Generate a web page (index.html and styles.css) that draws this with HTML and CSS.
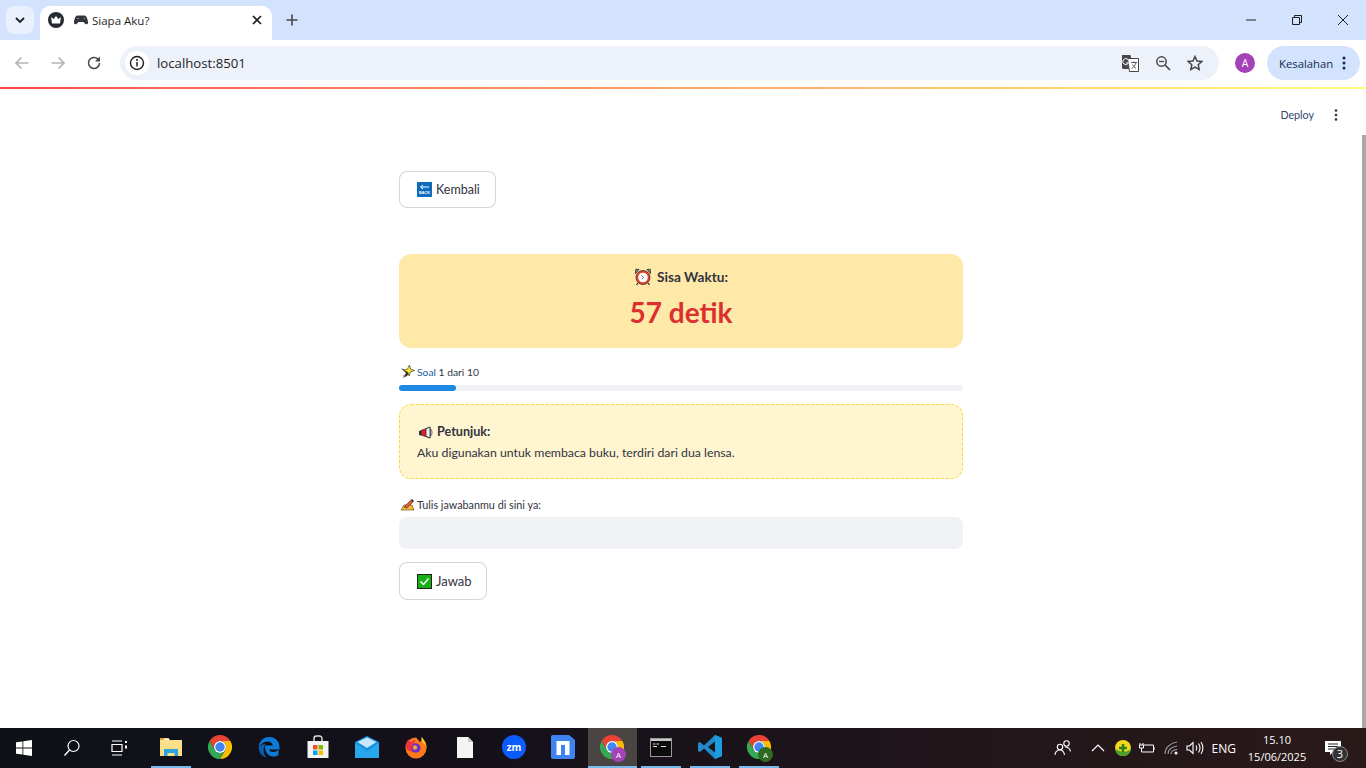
FILE: index.html
```html
<!DOCTYPE html>
<html lang="id">
<head>
  <meta charset="UTF-8">
  <title>Siapa Aku?</title>
  <link rel="stylesheet" href="styles.css">
</head>
<body>

<svg class="defs" width="0" height="0">
  <symbol id="chrome" viewBox="0 0 24 24">
    <path fill="#ea4335" d="M12 6h10.4A12 12 0 0 0 1.6 6L6.8 15A6 6 0 0 1 12 6z"/>
    <path fill="#fbbc04" d="M22.4 6H12a6 6 0 0 1 5.2 9L12 24A12 12 0 0 0 22.4 6z"/>
    <path fill="#34a853" d="M12 24l5.2-9a6 6 0 0 1-10.4 0L1.6 6A12 12 0 0 0 12 24z"/>
    <circle cx="12" cy="12" r="6" fill="#fff"/>
    <circle cx="12" cy="12" r="4.7" fill="#4285f4"/>
  </symbol>
</svg>

<!-- tab bar -->
<div class="tabstrip">
  <div class="tab-search">
    <svg width="12" height="12" viewBox="0 0 12 12"><path d="M2 4l4 4 4-4" fill="none" stroke="#1f1f1f" stroke-width="1.8"/></svg>
  </div>
  <div class="tab">
    <svg class="tab-favicon" width="16" height="16" viewBox="0 0 16 16"><circle cx="8" cy="8" r="8" fill="#262b33"/><path d="M3 5l2.6 2L8 4l2.400 3L13 5l-1 6.500H4z" fill="#fff"/></svg>
    <svg class="tab-emoji" width="16" height="16" viewBox="0 0 16 16"><path d="M4.500 3.500h7c2 0 3 3 3.500 6.500.3 2.200-1.700 3.200-3 1.500L10.500 10h-5L4 11.500c-1.300 1.700-3.300.7-3-1.500.5-3.500 1.500-6.500 3.500-6.500z" fill="#30343b"/><circle cx="11.500" cy="6.500" r=".9" fill="#6b7078"/><rect x="3.500" y="6" width="3" height="1" fill="#6b7078"/></svg>
    <span class="tab-title">Siapa Aku?</span>
    <svg class="tab-close" width="10" height="10" viewBox="0 0 10 10"><path d="M1 1l8 8M9 1l-8 8" stroke="#1f1f1f" stroke-width="1.700"/></svg>
  </div>
  <svg class="tab-new" width="12" height="12" viewBox="0 0 12 12"><path d="M6 .5v11M.5 6h11" stroke="#474747" stroke-width="1.600"/></svg>
  <div class="win-controls">
    <svg width="12" height="12" viewBox="0 0 12 12"><path d="M1 6h10" stroke="#1f1f1f"/></svg>
    <svg width="12" height="12" viewBox="0 0 12 12"><path d="M1.500 3.500h7v7h-7zM3.500 3.500v-2h7v7h-2" fill="none" stroke="#1f1f1f"/></svg>
    <svg width="12" height="12" viewBox="0 0 12 12"><path d="M1 1l10 10M11 1L1 11" stroke="#1f1f1f"/></svg>
  </div>
</div>

<!-- address bar -->
<div class="toolbar">
  <svg class="tool-btn" width="16" height="16" viewBox="0 0 16 16"><path d="M14.500 8H2M7.500 2.500L2 8l5.500 5.500" fill="none" stroke="#b2b4b7" stroke-width="1.700"/></svg>
  <svg class="tool-btn" width="16" height="16" viewBox="0 0 16 16"><path d="M1.500 8H14M8.500 2.500L14 8l-5.500 5.500" fill="none" stroke="#b2b4b7" stroke-width="1.700"/></svg>
  <svg class="tool-btn" width="16" height="16" viewBox="0 0 16 16"><path d="M13.500 8a5.500 5.500 0 1 1-1.600-3.900L13.500 5.700" fill="none" stroke="#474747" stroke-width="1.600"/><path d="M14 1.500V6.500H9z" fill="#474747"/></svg>
  <div class="omnibox">
    <div class="site-info">
      <svg width="16" height="16" viewBox="0 0 16 16"><circle cx="8" cy="8" r="6.500" fill="none" stroke="#1f1f1f" stroke-width="1.400"/><path d="M8 7v4.500" stroke="#1f1f1f" stroke-width="1.500"/><circle cx="8" cy="5" r="1" fill="#1f1f1f"/></svg>
    </div>
    <span class="url">localhost:8501</span>
    <div class="omni-actions">
      <svg width="18" height="18" viewBox="0 0 18 18"><path d="M1 1h8.500l3 14H2.500A1.500 1.500 0 0 1 1 13.500z" fill="#474747"/><path d="M6.500 4.500h11v13h-9z" fill="#fff" stroke="#474747"/><path d="M7 5.500a3 3 0 1 0 .5 3.500H5" fill="none" stroke="#fff" stroke-width="1"/><path d="M10 8.500h6M13 7.500v1M15 8.500c-.5 2.500-2.500 5-4.500 6M11.500 10.500c.6 1.500 2 3 3.500 4" fill="none" stroke="#474747" stroke-width=".9"/></svg>
      <svg width="16" height="16" viewBox="0 0 16 16"><circle cx="6.500" cy="6.500" r="4.700" fill="none" stroke="#474747" stroke-width="1.500"/><path d="M10 10l5 5" stroke="#474747" stroke-width="1.700"/><path d="M4 6.500h5" stroke="#474747" stroke-width="1.300"/></svg>
      <svg width="16" height="16" viewBox="0 0 16 16"><path d="M8 1.500l2 4.500 4.800.5-3.600 3.200 1 4.800L8 12.100l-4.200 2.400 1-4.800L1.200 6.500 6 6z" fill="none" stroke="#474747" stroke-width="1.500"/></svg>
    </div>
  </div>
  <div class="avatar">A</div>
  <div class="profile-pill">
    <span>Kesalahan</span>
    <svg width="4" height="14" viewBox="0 0 4 14"><circle cx="2" cy="2" r="1.500" fill="#0f2a52"/><circle cx="2" cy="7" r="1.500" fill="#0f2a52"/><circle cx="2" cy="12" r="1.500" fill="#0f2a52"/></svg>
  </div>
</div>

<!-- halaman streamlit -->
<div class="page">
  <div class="decoration"></div>
  <div class="app-header">
    <span class="deploy">Deploy</span>
    <svg width="4" height="12" viewBox="0 0 4 12"><circle cx="2" cy="1.500" r="1.300" fill="#31333f"/><circle cx="2" cy="6" r="1.300" fill="#31333f"/><circle cx="2" cy="10.500" r="1.300" fill="#31333f"/></svg>
  </div>
  <div class="scroll-thumb"></div>

  <main class="content">
    <button class="btn btn-back">
      <svg width="15" height="15" viewBox="0 0 15 15"><rect width="15" height="15" fill="#0f6cbd"/><path d="M12 5H4M6 3L3.500 5 6 7" fill="none" stroke="#fff" stroke-width="1"/><text x="7.500" y="12" class="back-text">BACK</text></svg>
      Kembali
    </button>

    <div class="timer-box">
      <div class="timer-label">
        <svg width="18" height="18" viewBox="0 0 18 18"><path d="M1.500 5.500L5 1.500 1.800 1.200zM16.500 5.500L13 1.500l3.200-.3z" fill="#8f9499" stroke="#222" stroke-width=".8"/><path d="M4 15l-1.500 2M14 15l1.500 2" stroke="#222" stroke-width="1.200"/><circle cx="9" cy="9.500" r="7" fill="#e8412c" stroke="#222" stroke-width=".7"/><circle cx="9" cy="9.500" r="4.800" fill="#fff"/><path d="M7.500 7.500L9.500 9.500 7.800 11" fill="none" stroke="#444" stroke-width=".8"/></svg>
        <b>Sisa Waktu:</b>
      </div>
      <div class="timer-value">57 detik</div>
    </div>

    <div class="progress-label">
      <svg width="15" height="15" viewBox="0 0 15 15"><path d="M1 4l5 5-3 5 4-2 3-4z" fill="#333"/><path d="M9.500 1l1 4 4 1.500-4 1.300-1.300 4.200L7.500 8 3.500 6.500l4-1.500z" fill="#fbe72d" stroke="#3d3a1a" stroke-width=".7"/><circle cx="4" cy="12" r="1" fill="#d86fa8"/></svg>
      <span><span class="blue">Soal</span> 1 dari 10</span>
    </div>
    <div class="progress-track"><div class="progress-fill"></div></div>

    <div class="hint-box">
      <div class="hint-title">
        <svg width="15" height="13" viewBox="0 0 15 13"><path d="M1 5l2-.5v5L1 9z" fill="#333"/><path d="M3 4.500L12 1v11L3 9z" fill="#d8232a" stroke="#222" stroke-width=".7"/><path d="M8 2.800L12 1v11L8 10.200z" fill="#eee" stroke="#222" stroke-width=".7"/><path d="M12.500 3c2 1 2 6 0 7z" fill="#eee" stroke="#222" stroke-width=".7"/></svg>
        <b>Petunjuk:</b>
      </div>
      <p class="hint-text">Aku digunakan untuk membaca buku, terdiri dari dua lensa.</p>
    </div>

    <label class="answer-label">
      <svg width="15" height="13" viewBox="0 0 15 13"><path d="M1 12L4 7h8l2 5z" fill="#f6b73c" stroke="#5b4310" stroke-width=".6"/><path d="M4 9l7-7 2 2-6 6z" fill="#e2572b" stroke="#333" stroke-width=".6"/><path d="M11 2l1-1 2 2-1 1z" fill="#222"/></svg>
      <span>Tulis jawabanmu di sini ya:</span>
    </label>
    <input class="answer-input" type="text">

    <button class="btn btn-answer">
      <svg width="15" height="15" viewBox="0 0 15 15"><rect x=".5" y=".5" width="14" height="14" fill="#16b016" stroke="#222"/><path d="M3.500 7.500l3 3 5-6" fill="none" stroke="#fff" stroke-width="1.500"/></svg>
      Jawab
    </button>
  </main>
</div>

<!-- taskbar windows -->
<footer class="taskbar">
  <div class="task-sys">
    <svg width="16" height="16" viewBox="0 0 16 16"><path d="M0 2.300l6.500-.9v6.200H0zM7.300 1.300L16 0v7.600H7.300zM0 8.400h6.500v6.200L0 13.700zM7.300 8.400H16V16l-8.700-1.200z" fill="#fff"/></svg>
  </div>
  <div class="task-sys">
    <svg width="18" height="18" viewBox="0 0 18 18"><circle cx="10.500" cy="7" r="5.500" fill="none" stroke="#fff" stroke-width="1.200"/><path d="M6.500 11L1.500 16.500" stroke="#fff" stroke-width="1.400"/></svg>
  </div>
  <div class="task-sys">
    <svg width="18" height="16" viewBox="0 0 18 16"><path d="M1 1h10M1 15h10M1 4.500h10v7H1z" fill="none" stroke="#fff" stroke-width="1.200"/><path d="M14 1h2v2h-2zM14 5.500h2v3h-2z" fill="#fff"/></svg>
  </div>
  <div class="task-app open">
    <svg width="22" height="20" viewBox="0 0 22 20"><path d="M0 1h8l2 2h12v16H0z" fill="#fbe08c"/><path d="M0 1h8l2 2H0z" fill="#e0a92f"/><rect x="4" y="1.500" width="5" height="1.500" fill="#fff"/><path d="M4 19v-7h14v7h-3.500v-3h-7v3z" fill="#2ea3e0"/></svg>
  </div>
  <div class="task-app"><svg width="24" height="24"><use href="#chrome"/></svg></div>
  <div class="task-app">
    <svg width="22" height="22" viewBox="0 0 22 22"><path d="M11.500 1C5 1 .8 6 .8 11c2-3.500 5.500-5.500 9-5.500 2.500 0 4.500 1.300 5 4H7c-.5 5 2.500 11 8 11 2 0 4-.5 5.500-1.500v-5C19 15 17 16 15 16c-2.500 0-3.500-1.200-3.800-2.500H21.500V11c0-5.500-4-10-10-10z" fill="#0c7ad6"/><path d="M.8 11C.5 16 4 21 9 21.500 4.500 18 5 12 7.500 8 4.500 8 2 9.500.8 11z" fill="#0a5fb0"/></svg>
  </div>
  <div class="task-app">
    <svg width="24" height="24" viewBox="0 0 24 24"><path d="M8 6V3.500A2.500 2.500 0 0 1 10.500 1h3A2.500 2.500 0 0 1 16 3.500V6" fill="none" stroke="#ddd" stroke-width="1.400"/><path d="M1.500 6h21v17h-21z" fill="#f3f3f3"/><rect x="7" y="10" width="4.500" height="4.500" fill="#f25022"/><rect x="12.500" y="10" width="4.500" height="4.500" fill="#7fba00"/><rect x="7" y="15.500" width="4.500" height="4.500" fill="#00a4ef"/><rect x="12.500" y="15.500" width="4.500" height="4.500" fill="#ffb900"/></svg>
  </div>
  <div class="task-app">
    <svg width="24" height="22" viewBox="0 0 24 22"><path d="M0 6l12-6 12 6v16H0z" fill="#1490df"/><path d="M2.500 6L12 1.500 21.500 6 12 12z" fill="#c7e8fb"/><path d="M0 7l12 8 12-8v15H0z" fill="#28a8ea"/></svg>
  </div>
  <div class="task-app">
    <svg width="24" height="24" viewBox="0 0 24 24"><path d="M12 2.500a10.500 10.500 0 1 0 10.500 10.500c0-4-1.500-7.500-5-11 .5 3-.5 4.500-1.500 5C14.500 5 13 3.500 12 2.500z" fill="#ff7a1a"/><path d="M17.500 2c3.500 3.500 5 7 5 11-1-3-2.500-5-4.500-6z" fill="#ffc32e"/><path d="M1.500 13C1 9 3 6 5 4c0 2 1 3 2.500 3C9 5.500 11 5 12 5c-1 1-2 2-2 3 3 0 6 2 6 5s-3 5-6 4.500C6 17 4 15 1.500 13z" fill="#e8363f"/><circle cx="12" cy="13" r="4.500" fill="#6a2fd0"/><circle cx="11" cy="12.500" r="2.200" fill="#ff9f2e"/></svg>
  </div>
  <div class="task-app">
    <svg width="16" height="21" viewBox="0 0 16 21"><path d="M0 0h11l5 5v16H0z" fill="#f4f4f4"/><path d="M11 0l5 5h-5z" fill="#c9c9c9"/></svg>
  </div>
  <div class="task-app"><div class="zoom-icon">zm</div></div>
  <div class="task-app">
    <svg width="24" height="24" viewBox="0 0 24 24"><path d="M2 0h16l6 5v17a2 2 0 0 1-2 2H2a2 2 0 0 1-2-2V2a2 2 0 0 1 2-2z" fill="#3f83f0"/><path d="M5.500 20V6h13v14h-4.500V10h-4v10z" fill="#fff"/></svg>
  </div>
  <div class="task-app active open">
    <div class="chrome-badge">
      <svg width="24" height="24"><use href="#chrome"/></svg>
      <span class="mini-badge purple">A</span>
    </div>
  </div>
  <div class="task-app open">
    <svg width="22" height="19" viewBox="0 0 22 19"><rect x=".5" y=".5" width="21" height="18" fill="#0c0c0c" stroke="#9a9a9a"/><rect x="1" y="1" width="20" height="2" fill="#c8c8c8"/><path d="M3 6h2.500M6.500 6H9M3 8.500h4M11 8.500h5" stroke="#ddd"/></svg>
  </div>
  <div class="task-app open">
    <svg width="24" height="24" viewBox="0 0 24 24"><path d="M17 0l7 3v18l-7 3L6 13.500 2 17l-2-1V8l2-1 4 3.500z" fill="#2489ca"/><path d="M17 0l7 3v18l-7 3z" fill="#1b9de2"/><path d="M17 6.500L10 12l7 5.500z" fill="#1a1414"/></svg>
  </div>
  <div class="task-app open">
    <div class="chrome-badge">
      <svg width="24" height="24"><use href="#chrome"/></svg>
      <span class="mini-badge green">A</span>
    </div>
  </div>

  <div class="tray">
    <svg class="tray-people" width="18" height="16" viewBox="0 0 18 16"><circle cx="6" cy="7" r="2.700" fill="none" stroke="#fff" stroke-width="1.100"/><circle cx="12.500" cy="3.500" r="2.700" fill="none" stroke="#fff" stroke-width="1.100"/><path d="M1 15c0-3 2-5 5-5s4 2 4.500 5M11 7c3 0 5 2 5.500 4.500" fill="none" stroke="#fff" stroke-width="1.100"/></svg>
    <svg class="tray-chevron" width="14" height="8" viewBox="0 0 14 8"><path d="M1 7l6-6 6 6" fill="none" stroke="#fff" stroke-width="1.200"/></svg>
    <svg class="tray-guard" width="16" height="16" viewBox="0 0 16 16"><circle cx="8" cy="8" r="8" fill="#f2d91f"/><path d="M0 8a8 8 0 0 0 16 0c-2 5-12 5-16 0z" fill="#4aa02c"/><path d="M8 4v8M4 8h8" stroke="#2f7d1b" stroke-width="2.500"/></svg>
    <svg class="tray-battery" width="16" height="12" viewBox="0 0 16 12"><path d="M5 3h9.500v7H5" fill="none" stroke="#fff"/><path d="M15 5v3" stroke="#fff"/><path d="M1 1v2M4 1v2M.5 3h4v3h-4zM2.500 6v4H5" fill="none" stroke="#fff"/></svg>
    <svg class="tray-wifi" width="16" height="14" viewBox="0 0 16 14"><path d="M1 13C1 7 6 2 13 1M4 13c0-4 3.500-7 9-8M7 13c0-2.500 2-4 6-4.500" fill="none" stroke="#9c9c9c" stroke-width="1.100"/><circle cx="12" cy="12" r="1.500" fill="#fff"/></svg>
    <svg class="tray-sound" width="18" height="14" viewBox="0 0 18 14"><path d="M1 5v4h2.500L7 12.500v-11L3.500 5z" fill="none" stroke="#fff" stroke-width="1.100"/><path d="M10 4.500c1 1.500 1 3.500 0 5M12.500 2.500c2 3 2 6 0 9M15 1c2.500 3.500 2.500 8.500 0 12" fill="none" stroke="#fff" stroke-width="1.100"/></svg>
    <span class="tray-lang">ENG</span>
    <div class="tray-clock"><span>15.10</span><span>15/06/2025</span></div>
    <div class="tray-notif">
      <svg width="16" height="14" viewBox="0 0 16 14"><path d="M0 0h16v11H8l-3 3v-3H0z" fill="#fff"/><path d="M3 3h10M3 5.500h10M3 8h7" stroke="#222"/></svg>
      <span class="notif-count">3</span>
    </div>
  </div>
</footer>

</body>
</html>
```

FILE: styles.css
```css
* {
  box-sizing: border-box;
}

html, body {
  margin: 0;
  height: 768px;
  overflow: hidden;
}

body {
  display: flex;
  flex-direction: column;
  background: #fff;
  font-family: Lato, "Noto Sans", sans-serif;
  color: #31333f;
}

.defs {
  position: absolute;
}

/* Tab bar */
.tabstrip {
  height: 40px;
  flex: none;
  display: flex;
  background: #d3e3fd;
  padding: 6px 0 0 6px;
}

.tab-search {
  width: 28px;
  height: 28px;
  border-radius: 8px;
  background: #e9f0fc;
  display: flex;
  align-items: center;
  justify-content: center;
}

.tab {
  width: 232px;
  height: 34px;
  margin-left: 6px;
  background: #fff;
  border-radius: 10px 10px 0 0;
  display: flex;
  align-items: center;
  padding: 0 10px 6px 8px;
}

.tab-emoji {
  margin-left: 9px;
}

.tab-title {
  font: 11.500px "Open Sans", sans-serif;
  color: #1f1f1f;
  margin-left: 3px;
  flex: 1;
}

.tab-new {
  margin: 8px 0 0 14px;
}

.win-controls {
  margin-left: auto;
  display: flex;
  gap: 34px;
  padding: 8px 17px 0 0;
}

/* Address bar */
.toolbar {
  height: 46px;
  flex: none;
  background: #fff;
  border-radius: 8px 8px 0 0;
  display: flex;
  align-items: center;
  padding: 0 6px 0 14px;
}

.tool-btn {
  margin-right: 20px;
}

.omnibox {
  width: 1099px;
  height: 34px;
  margin-left: -2px;
  background: #edf2fa;
  border-radius: 17px;
  display: flex;
  align-items: center;
  padding: 0 16px 0 5px;
}

.site-info {
  width: 24px;
  height: 24px;
  border-radius: 50%;
  background: #fff;
  display: flex;
  align-items: center;
  justify-content: center;
}

.url {
  font: 13.200px "Open Sans", sans-serif;
  color: #1f1f1f;
  margin-left: 8px;
}

.omni-actions {
  margin-left: auto;
  display: flex;
  align-items: center;
  gap: 16px;
}

.avatar {
  width: 20px;
  height: 20px;
  margin-left: 16px;
  border-radius: 50%;
  background: #a542b8;
  color: #fff;
  font: 10.500px/20px "Open Sans", sans-serif;
  text-align: center;
}

.profile-pill {
  width: 93px;
  height: 34px;
  margin-left: 12px;
  border-radius: 17px;
  background: #d3e3fd;
  display: flex;
  align-items: center;
  justify-content: space-between;
  padding: 0 14px 0 12px;
  font: 11.300px "Open Sans", sans-serif;
  color: #0f2a52;
}

/* Halaman */
.page {
  flex: 1;
  position: relative;
  overflow: hidden;
  padding-top: 1px;
}

.decoration {
  height: 2px;
  background: linear-gradient(90deg, #ff4b4b, #fffd80);
}

.app-header {
  height: 44px;
  display: flex;
  align-items: center;
  justify-content: flex-end;
  gap: 20px;
  padding: 7px 28px 0 0;
}

.deploy {
  font-size: 10.700px;
  color: #31456e;
}

.scroll-thumb {
  position: absolute;
  top: 49px;
  right: 0;
  bottom: 0;
  width: 4px;
  background: #a8a8a8;
}

.content {
  width: 564px;
  margin: 38px 0 0 399px;
}

.btn {
  height: 37px;
  display: flex;
  align-items: center;
  gap: 4px;
  background: #fff;
  border: 1px solid rgba(49, 51, 63, 0.2);
  border-radius: 8px;
  font: 13px Lato, sans-serif;
  color: #31333f;
  padding: 0 0 0 17px;
}

.btn-back {
  width: 97px;
  font-size: 12.500px;
}

.btn-answer {
  width: 88px;
  height: 38px;
  margin-top: 13px;
}

.back-text {
  font: bold 3.800px "Liberation Sans", sans-serif;
  fill: #fff;
  text-anchor: middle;
}

.timer-box {
  height: 94px;
  margin-top: 46px;
  background: #ffe9a8;
  border-radius: 12px;
  text-align: center;
  padding-top: 14px;
}

.timer-label {
  display: flex;
  justify-content: center;
  align-items: center;
  gap: 5px;
  font-size: 13.600px;
  line-height: 18px;
}

.timer-value {
  font-size: 28px;
  font-weight: 700;
  line-height: 36px;
  margin-top: 8px;
  color: #dc2f2f;
}

.progress-label {
  display: flex;
  align-items: center;
  gap: 2px;
  height: 15px;
  margin: 16px 0 0 1px;
  font-size: 10.300px;
}

.blue {
  color: #1c5a9e;
}

.progress-track {
  height: 6px;
  margin-top: 6px;
  background: #f0f2f6;
  border-radius: 3px;
}

.progress-fill {
  width: 57px;
  height: 6px;
  background: #1e88e5;
  border-radius: 3px;
}

.hint-box {
  height: 75px;
  margin-top: 13px;
  background: #fff5d1;
  border: 1px dashed #fdd835;
  border-radius: 12px;
  padding: 17px 16px 0 17px;
  line-height: 20px;
}

.hint-title {
  display: flex;
  align-items: center;
  gap: 4px;
  padding-left: 1px;
  font-size: 12.600px;
}

.hint-text {
  margin: 1px 0 0;
  font-size: 12.300px;
}

.answer-label {
  display: flex;
  align-items: center;
  gap: 2px;
  height: 16px;
  margin: 17px 0 0 1px;
  font-size: 10.800px;
}

.answer-input {
  display: block;
  width: 100%;
  height: 32px;
  margin-top: 5px;
  background: #f0f2f6;
  border: none;
  border-radius: 8px;
}

/* Taskbar */
.taskbar {
  height: 40px;
  flex: none;
  display: flex;
  align-items: stretch;
  background: linear-gradient(90deg, #0e1118, #14101a 35%, #2a1a1a);
  color: #fff;
}

.task-sys {
  width: 48px;
  display: flex;
  align-items: center;
  justify-content: center;
}

.task-app {
  width: 49px;
  display: flex;
  align-items: center;
  justify-content: center;
  border-bottom: 2px solid transparent;
  position: relative;
}

.task-sys + .task-app {
  margin-left: 2.500px;
}

.task-app.open::after {
  content: "";
  position: absolute;
  left: 4.500px;
  right: 4.500px;
  bottom: -2px;
  height: 2px;
  background: #76b9ed;
}

.task-app.active {
  background: #4a4443;
}

.task-app.active::after {
  left: 0;
  right: 0;
}

.zoom-icon {
  width: 24px;
  height: 24px;
  border-radius: 50%;
  background: #0b5cff;
  color: #fff;
  font: bold 10px/24px "Open Sans", sans-serif;
  text-align: center;
}

.chrome-badge {
  position: relative;
  width: 24px;
  height: 24px;
}

.mini-badge {
  position: absolute;
  right: -2px;
  bottom: -3px;
  width: 15px;
  height: 15px;
  border-radius: 50%;
  color: #fff;
  font: 8px/15px "Open Sans", sans-serif;
  text-align: center;
}

.purple {
  background: #a542b8;
}

.green {
  background: #2e6b1f;
}

.tray {
  margin-left: auto;
  display: flex;
  align-items: center;
  padding-right: 10px;
  font: 12px "Open Sans", sans-serif;
}

.tray-chevron {
  margin-left: 19px;
}

.tray-guard {
  margin-left: 10px;
}

.tray-battery {
  margin-left: 8px;
}

.tray-wifi {
  margin-left: 9px;
}

.tray-sound {
  margin-left: 6px;
}

.tray-lang {
  margin-left: 8px;
}

.tray-clock {
  width: 66px;
  margin-left: 8px;
  padding-bottom: 1px;
  display: flex;
  flex-direction: column;
  align-items: center;
  font-size: 11px;
  line-height: 17px;
}

.tray-notif {
  position: relative;
  width: 46px;
  display: flex;
  justify-content: center;
}

.notif-count {
  position: absolute;
  right: 8px;
  top: 5px;
  width: 16px;
  height: 16px;
  border-radius: 50%;
  border: 1px solid #8a8a8a;
  background: #333;
  font-size: 11px;
  line-height: 14px;
  text-align: center;
}
```
